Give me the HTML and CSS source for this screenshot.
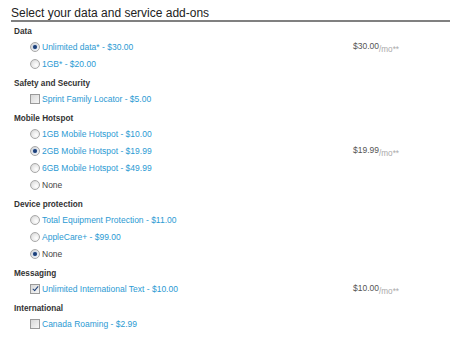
FILE: index.html
```html
<!DOCTYPE html>
<html lang="en">
  <head>
    <meta charset="UTF-8" />
    <title>Data and service add-ons</title>
    <link rel="stylesheet" href="styles.css">
  </head>
  <body>
    <div class="addons">
      <h2 class="addons-title">Select your data and service add-ons</h2>

      <!-- Data -->
      <div class="group">
        <h3 class="group-title">Data</h3>
        <div class="option">
          <span class="radio on"></span>
          <span class="label">Unlimited data* - $30.00</span>
          <span class="price">$30.00<small>/mo**</small></span>
        </div>
        <div class="option">
          <span class="radio"></span>
          <span class="label">1GB* - $20.00</span>
        </div>
      </div>

      <!-- Safety -->
      <div class="group">
        <h3 class="group-title">Safety and Security</h3>
        <div class="option">
          <span class="check"></span>
          <span class="label">Sprint Family Locator - $5.00</span>
        </div>
      </div>

      <!-- Hotspot -->
      <div class="group">
        <h3 class="group-title">Mobile Hotspot</h3>
        <div class="option">
          <span class="radio"></span>
          <span class="label">1GB Mobile Hotspot - $10.00</span>
        </div>
        <div class="option">
          <span class="radio on"></span>
          <span class="label">2GB Mobile Hotspot - $19.99</span>
          <span class="price">$19.99<small>/mo**</small></span>
        </div>
        <div class="option">
          <span class="radio"></span>
          <span class="label">6GB Mobile Hotspot - $49.99</span>
        </div>
        <div class="option">
          <span class="radio"></span>
          <span class="label none">None</span>
        </div>
      </div>

      <!-- Device protection -->
      <div class="group">
        <h3 class="group-title">Device protection</h3>
        <div class="option">
          <span class="radio"></span>
          <span class="label">Total Equipment Protection - $11.00</span>
        </div>
        <div class="option">
          <span class="radio"></span>
          <span class="label">AppleCare+ - $99.00</span>
        </div>
        <div class="option">
          <span class="radio on"></span>
          <span class="label none">None</span>
        </div>
      </div>

      <!-- Messaging -->
      <div class="group">
        <h3 class="group-title">Messaging</h3>
        <div class="option">
          <span class="check on"></span>
          <span class="label">Unlimited International Text - $10.00</span>
          <span class="price">$10.00<small>/mo**</small></span>
        </div>
      </div>

      <!-- International -->
      <div class="group">
        <h3 class="group-title">International</h3>
        <div class="option">
          <span class="check"></span>
          <span class="label">Canada Roaming - $2.99</span>
        </div>
      </div>
    </div>
  </body>
</html>
```

FILE: styles.css
```css
body {
  margin: 0;
  padding: 0;
  background-color: #fff;
  font-family: "Liberation Sans", Arial, sans-serif;
  color: #333;
}

.addons {
  padding: 7px 0 0 11px;
}

.addons-title {
  margin: 0;
  font-size: 12px;
  font-weight: normal;
  line-height: 13px;
  color: #222;
  border-bottom: 2px solid #808080;
}

.group {
  margin-bottom: 3px;
}

.group:first-of-type {
  margin-top: 1.5px;
}

.group-title {
  margin: 0;
  padding-left: 3px;
  font-size: 8.2px;
  font-weight: bold;
  line-height: 15px;
  color: #333;
}

.option {
  display: grid;
  grid-template-columns: 12px 311px auto;
  align-items: center;
  height: 17px;
  padding-left: 19px;
  font-size: 8.5px;
}

.label {
  color: #2b9ad3;
  white-space: nowrap;
}

.label.none {
  color: #444;
}

.price {
  color: #555;
  white-space: nowrap;
}

.price small {
  font-size: 8.2px;
  color: #aaa;
  vertical-align: -3px;
}

/* radio buttons */
.radio {
  position: relative;
  width: 8px;
  height: 8px;
  border: 1px solid #a8a8a8;
  border-radius: 50%;
  background: radial-gradient(circle at 65% 65%, #fff 0, #e8e8e8 55%, #c8c8c8 100%);
}

.radio.on::after {
  content: "";
  position: absolute;
  left: 2px;
  top: 2px;
  width: 4px;
  height: 4px;
  border-radius: 50%;
  background: #1d3f78;
  box-shadow: 0 0 1.5px #5a8bd0;
}

/* checkboxes */
.check {
  position: relative;
  width: 8px;
  height: 8px;
  border: 1px solid #9a9a9a;
  background: linear-gradient(135deg, #d8d8d8, #f6f6f6);
}

.check.on::after {
  content: "";
  position: absolute;
  left: 2.5px;
  top: 0;
  width: 2px;
  height: 5px;
  border: solid #1d3f78;
  border-width: 0 1.5px 1.5px 0;
  transform: rotate(40deg);
}
```
